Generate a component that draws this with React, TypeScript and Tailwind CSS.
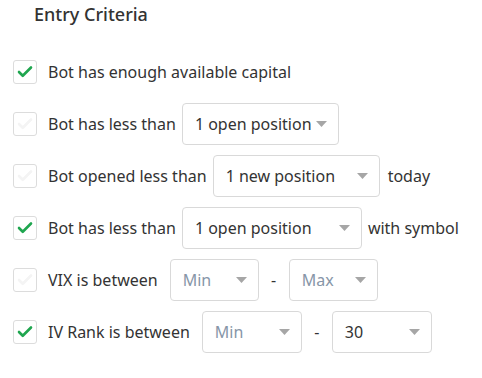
import { Check } from "lucide-react"

type Opt = { value: string; placeholder?: boolean; width: string }

function Checkbox({ checked }: { checked: boolean }) {
    return (
        <div className="flex h-[24px] w-[24px] shrink-0 items-center justify-center rounded-[3px] border border-[#dcdcdc] bg-white">
            <Check
                className={checked ? "h-[18px] w-[18px] text-[#1fa64f]" : "h-[18px] w-[18px] text-[#f4f4f4]"}
                strokeWidth={3.5}
            />
        </div>
    )
}

function Select({ value, placeholder, width }: Opt) {
    return (
        <div className={`flex h-[42px] ${width} shrink-0 items-center justify-between rounded-[4px] border border-[#d9d9d9] bg-white pl-[12px] pr-[11px]`}>
            <span className={placeholder ? "text-[#8796a8]" : "text-[#333]"}>{value}</span>
            <svg width="11" height="6" viewBox="0 0 11 6" className="shrink-0">
                <path d="M0 0h11L5.5 6z" fill="#a6a6a6" />
            </svg>
        </div>
    )
}

export default function App() {
    return (
        <div
            className="h-[378px] w-[482px] bg-white pl-[13px] text-[16px] text-[#333]"
            style={{ fontFamily: '"Noto Sans", "Open Sans", sans-serif' }}
        >
            <div className="pl-[21px] pt-[1px] text-[18px] font-medium leading-[27px] text-[#333]">Entry Criteria</div>

            <div className="mt-[23px] flex flex-col gap-[10px]">
                {/* Row 1 */}
                <div className="flex h-[42px] items-center">
                    <Checkbox checked />
                    <span className="ml-[11px]">Bot has enough available capital</span>
                </div>

                {/* Row 2 */}
                <div className="flex h-[42px] items-center">
                    <Checkbox checked={false} />
                    <span className="ml-[11px]">Bot has less than</span>
                    <div className="ml-[6px]">
                        <Select value="1 open position" width="w-[157px]" />
                    </div>
                </div>

                {/* Row 3 */}
                <div className="flex h-[42px] items-center">
                    <Checkbox checked={false} />
                    <span className="ml-[11px]">Bot opened less than</span>
                    <div className="ml-[6px]">
                        <Select value="1 new position" width="w-[167px]" />
                    </div>
                    <span className="ml-[8px]">today</span>
                </div>

                {/* Row 4 */}
                <div className="flex h-[42px] items-center">
                    <Checkbox checked />
                    <span className="ml-[11px]">Bot has less than</span>
                    <div className="ml-[6px]">
                        <Select value="1 open position" width="w-[180px]" />
                    </div>
                    <span className="ml-[6px]">with symbol</span>
                </div>

                {/* Row 5 */}
                <div className="flex h-[42px] items-center">
                    <Checkbox checked={false} />
                    <span className="ml-[11px]">VIX is between</span>
                    <div className="ml-[12px]">
                        <Select value="Min" placeholder width="w-[89px]" />
                    </div>
                    <span className="w-[30px] text-center">-</span>
                    <Select value="Max" placeholder width="w-[89px]" />
                </div>

                {/* Row 6 */}
                <div className="flex h-[42px] items-center">
                    <Checkbox checked />
                    <span className="ml-[11px]">IV Rank is between</span>
                    <div className="ml-[12px]">
                        <Select value="Min" placeholder width="w-[100px]" />
                    </div>
                    <span className="w-[30px] text-center">-</span>
                    <Select value="30" width="w-[100px]" />
                </div>
            </div>
        </div>
    )
}
